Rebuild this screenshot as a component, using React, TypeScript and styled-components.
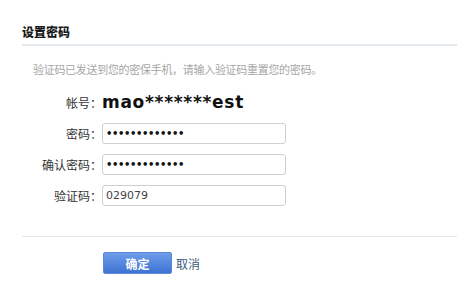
import React, { useState } from 'react';
import styled, { createGlobalStyle } from 'styled-components';

const GlobalStyle = createGlobalStyle`
  html, body {
    margin: 0;
    padding: 0;
    background: #ffffff;
  }
  body {
    font-family: "DejaVu Sans", "Noto Sans CJK SC", sans-serif;
    font-size: 12px;
    color: #333;
  }
`;

const Page = styled.div`
  width: 457px;
  height: 291px;
  padding: 24px 0 0 22px;
  box-sizing: border-box;
  overflow: hidden;
`;

const Title = styled.h2`
  margin: 0;
  padding: 0 0 4px;
  font-family: "Noto Sans CJK SC", sans-serif;
  font-size: 12px;
  font-weight: 900;
  line-height: 16px;
  color: #1a1a1a;
  border-bottom: 2px solid #e3e8ef;
`;

const Hint = styled.p`
  margin: 15px 0 0 11px;
  font-family: "Noto Sans CJK SC", sans-serif;
  font-size: 11px;
  letter-spacing: -0.3px;
  line-height: 16px;
  color: #a6a6a6;
`;

const Form = styled.div`
  display: grid;
  grid-template-columns: 80px 184px;
  row-gap: 10px;
  align-items: center;
  margin-top: 14px;
`;

const Label = styled.span`
  font-family: "Noto Sans CJK SC", sans-serif;
  font-size: 12px;
  text-align: right;
  color: #333;
  line-height: 21px;
`;

const Account = styled.span`
  font-family: "DejaVu Sans", sans-serif;
  font-weight: bold;
  font-size: 17px;
  letter-spacing: 0.7px;
  color: #111;
  line-height: 22px;
`;

const Input = styled.input`
  box-sizing: border-box;
  width: 184px;
  height: 21px;
  padding: 0 3px;
  border: 1px solid #cfcfcf;
  border-radius: 3px;
  font-family: "DejaVu Sans", sans-serif;
  font-size: 11px;
  color: #444;
  outline: none;
  &[type='password'] {
    font-size: 10px;
    font-weight: bold;
    letter-spacing: -0.4px;
    color: #111;
  }
`;

const Footer = styled.div`
  margin-top: 30px;
  border-top: 1px solid #e6e6e6;
  padding: 15px 0 0 81px;
  display: flex;
  align-items: center;
  gap: 4px;
`;

const Submit = styled.button`
  width: 69px;
  height: 22px;
  border: 1px solid #5b88d6;
  border-radius: 2px;
  background: linear-gradient(#6d9de9, #3f73d4);
  color: #fff;
  font-family: "Noto Sans CJK SC", sans-serif;
  font-size: 12px;
  font-weight: bold;
  padding: 0;
  cursor: pointer;
`;

const Cancel = styled.a`
  font-family: "Noto Sans CJK SC", sans-serif;
  font-size: 12px;
  color: #3b5a80;
  text-decoration: none;
  cursor: pointer;
`;

export default function App() {
  const [pwd, setPwd] = useState('1234567890123');
  const [confirm, setConfirm] = useState('1234567890123');
  const [code, setCode] = useState('029079');

  return (
    <>
      <GlobalStyle />
      <Page>
        <Title>设置密码</Title>
        <Hint>验证码已发送到您的密保手机，请输入验证码重置您的密码。</Hint>
        <Form>
          <Label>帐号：</Label>
          <Account>mao*******est</Account>
          <Label>密码：</Label>
          <Input type="password" value={pwd} onChange={(e) => setPwd(e.target.value)} />
          <Label>确认密码：</Label>
          <Input type="password" value={confirm} onChange={(e) => setConfirm(e.target.value)} />
          <Label>验证码：</Label>
          <Input type="text" value={code} onChange={(e) => setCode(e.target.value)} />
        </Form>
        <Footer>
          <Submit type="button">确定</Submit>
          <Cancel>取消</Cancel>
        </Footer>
      </Page>
    </>
  );
}
